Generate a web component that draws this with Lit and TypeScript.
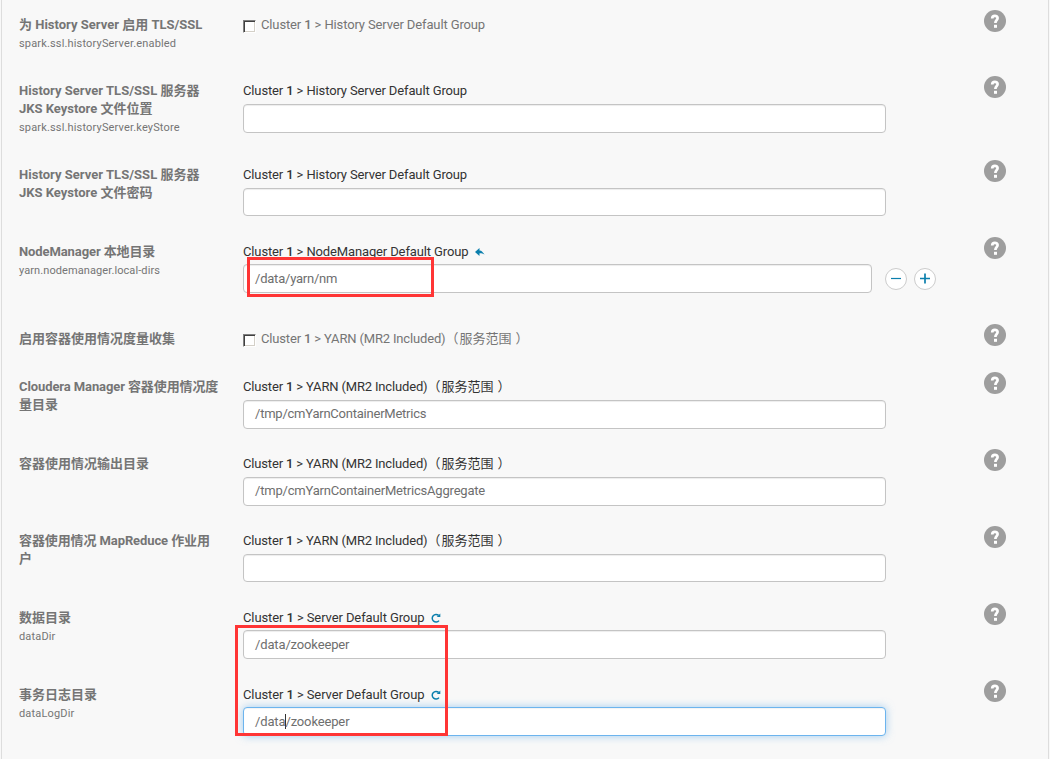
import { LitElement, html, css, svg, nothing } from "lit";
import { customElement } from "lit/decorators.js";
import { classMap } from "lit/directives/class-map.js";

interface Row {
  h: number;
  title: [string, string][];
  prop?: string;
  group: string;
  scope?: string;
  gw: string;
  kind: "check" | "text";
  value?: string;
  vw?: string;
  icon?: "undo" | "refresh";
  raised?: boolean;
  short?: boolean;
  list?: boolean;
  focus?: boolean;
}

const yarn = { group: "YARN (MR2 Included)", scope: "服务范围", gw: "g3" };
const history = { group: "History Server Default Group", gw: "g1" };

const rows: Row[] = [
  { h: 66, title: [["为 History Server 启用 TLS/SSL", "t0"]], prop: "spark.ssl.historyServer.enabled", ...history, kind: "check" },
  { h: 84, title: [["History Server TLS/SSL 服务器", "t2"], ["JKS Keystore 文件位置", "t0"]], prop: "spark.ssl.historyServer.keyStore", ...history, kind: "text" },
  { h: 77, title: [["History Server TLS/SSL 服务器", "t2"], ["JKS Keystore 文件密码", "t0"]], ...history, kind: "text", short: true },
  { h: 87, title: [["NodeManager 本地目录", "t4"]], prop: "yarn.nodemanager.local-dirs", group: "NodeManager Default Group", gw: "g1", kind: "text", value: "/data/yarn/nm", vw: "v1", icon: "undo", raised: true, list: true },
  { h: 48, title: [["启用容器使用情况度量收集", "t0"]], ...yarn, kind: "check" },
  { h: 77, title: [["Cloudera Manager 容器使用情况度", "t4"], ["量目录", "t0"]], ...yarn, kind: "text", value: "/tmp/cmYarnContainerMetrics", vw: "v2" },
  { h: 77, title: [["容器使用情况输出目录", "t0"]], ...yarn, kind: "text", value: "/tmp/cmYarnContainerMetricsAggregate", vw: "v3" },
  { h: 77, title: [["容器使用情况 MapReduce 作业用", "t4"], ["户", "t0"]], ...yarn, kind: "text", short: true },
  { h: 77, title: [["数据目录", "t0"]], prop: "dataDir", group: "Server Default Group", gw: "g4", kind: "text", value: "/data/zookeeper", vw: "v4", icon: "refresh", raised: true },
  { h: 79, title: [["事务日志目录", "t0"]], prop: "dataLogDir", group: "Server Default Group", gw: "g4", kind: "text", value: "/data/zookeeper", vw: "v4", icon: "refresh", raised: true, focus: true },
];

const undoIcon = svg`<svg width="10" height="10" viewBox="0 0 10 10"><path d="M0 5L4.5 1V3.6C7 3.8 7.6 5.2 9.6 7.6C7.8 6.6 6.4 6.2 4.5 6.3V9Z" fill="#0b7fad"/></svg>`;
const refreshIcon = svg`<svg width="10" height="10" viewBox="0 0 10 10"><path d="M7.6 2.4A3.8 3.8 0 1 0 8 7.6" fill="none" stroke="#0b7fad" stroke-width="1.5"/><path d="M9.3 .4V4H5.7Z" fill="#0b7fad"/></svg>`;

@customElement("app-root")
export class AppRoot extends LitElement {
  static styles = css`
    :host { display: block; position: relative; width: 1050px; height: 759px; overflow: hidden; background: #f8f8f8; font: 13px/18px Roboto, "Noto Sans CJK SC", sans-serif; color: #333; }
    .panel { box-sizing: border-box; height: 759px; margin: 0 1px; padding: 10px 0 0 17px; border: solid #ddd; border-width: 0 1px; }
    .row { display: grid; grid-template-columns: 224px 741px 22px; align-items: start; box-sizing: border-box; }
    .label { padding-top: 6px; color: #757575; white-space: nowrap; }
    .title { height: 18px; font-weight: 700; }
    .t2 { letter-spacing: .03px; }
    .t4 { letter-spacing: -.1px; }
    .prop { font-size: 11px; line-height: 18px; padding-top: 1px; letter-spacing: .16px; }
    .list .prop { letter-spacing: .09px; }
    .field { padding-top: 6px; white-space: nowrap; }
    .group { display: flex; align-items: center; height: 18px; }
    .group svg { margin-left: 7px; }
    .g1 { letter-spacing: -.13px; }
    .g3 { letter-spacing: -.16px; }
    .g4 { letter-spacing: -.1px; }
    .scope { letter-spacing: 0; }
    .scope i { font-style: normal; margin: 0 4px 0 1px; }
    .v1 { letter-spacing: -.22px; }
    .v2 { letter-spacing: -.23px; }
    .v3 { letter-spacing: -.2px; }
    .v4 { letter-spacing: -.14px; }
    .one { font-weight: 500; }
    .check { color: #757575; }
    .box { box-sizing: border-box; width: 13px; height: 13px; margin: 3px 5px 0 0; border: 1px solid; border-color: #808080 #fff #fff #808080; box-shadow: inset 1px 1px #404040, inset -1px -1px #d4d0c8; background: #fff; }
    .line { display: flex; align-items: center; margin-top: 4px; }
    .raised .line { margin-top: 3px; }
    .input { box-sizing: border-box; width: 643px; height: 29px; padding: 0 11px; border: 1px solid #c4c4c4; border-radius: 4px; background: #fff; box-shadow: inset 0 1px 1px rgba(0,0,0,.075); line-height: 25px; color: #6e6e6e; }
    .raised .input { line-height: 27px; }
    .short .input { height: 28px; }
    .list .input { width: 629px; margin-right: 13px; }
    .focus .input { border-color: #6cb4ee; box-shadow: inset 0 1px 1px rgba(0,0,0,.05), 0 0 8px rgba(102,175,233,.6); }
    .caret { display: inline-block; width: 1px; height: 15px; margin-right: -1px; vertical-align: -3px; background: #333; }
    .round { box-sizing: border-box; width: 22px; height: 22px; margin-right: 7px; border: 1px solid #ccc; border-radius: 50%; background: #fff; }
    .round svg, .help { display: block; }
    .mark { position: absolute; box-sizing: border-box; border: 3px solid #ff3535; }
    .m1 { left: 247px; top: 257px; width: 187px; height: 40px; }
    .m2 { left: 235px; top: 625px; width: 213px; height: 111px; }
  `;

  help() {
    return svg`<svg class="help" width="22" height="22" viewBox="0 0 22 22"><circle cx="11" cy="11" r="11" fill="#9e9e9e"/><path d="M8.2 8.4C8.2 5 13.6 5.1 13.6 8.1C13.6 10.1 11.4 10.3 11.4 13" fill="none" stroke="#fff" stroke-width="2.7"/><rect x="10" y="14.8" width="3" height="3" fill="#fff"/></svg>`;
  }

  value(r: Row) {
    if (!r.value) return nothing;
    return html`<span class=${r.vw!}>${r.focus ? html`/data<i class="caret"></i>/zookeeper` : r.value}</span>`;
  }

  row(r: Row) {
    const scope = r.scope ? html`<span class="scope">（<i>${r.scope}</i>）</span>` : nothing;
    const group = html`<span class=${r.gw}>Cluster <span class="one">1</span> &gt; ${r.group}${scope}</span>`;
    return html`<div class=${classMap({ row: true, raised: !!r.raised, short: !!r.short, list: !!r.list, focus: !!r.focus })} style="height:${r.h}px">
      <div class="label">${r.title.map(([t, c]) => html`<div class="title"><span class=${c}>${t}</span></div>`)}${r.prop ? html`<div class="prop">${r.prop}</div>` : nothing}</div>
      <div class="field">
        ${r.kind === "check"
          ? html`<div class="group check"><span class="box"></span>${group}</div>`
          : html`<div class="group">${group}${r.icon === "undo" ? undoIcon : r.icon ? refreshIcon : nothing}</div>
            <div class="line"><div class="input">${this.value(r)}</div>${r.list
              ? html`<div class="round"><svg width="20" height="20"><path d="M5 9.5H15" stroke="#0b7fad" stroke-width="1.2"/></svg></div><div class="round"><svg width="20" height="20"><path d="M5 9.5H15M10 4.5V14.5" stroke="#0b7fad" stroke-width="1.7"/></svg></div>`
              : nothing}</div>`}
      </div>
      ${this.help()}
    </div>`;
  }

  render() {
    return html`<div class="panel">${rows.map((r) => this.row(r))}</div><div class="mark m1"></div><div class="mark m2"></div>`;
  }
}
